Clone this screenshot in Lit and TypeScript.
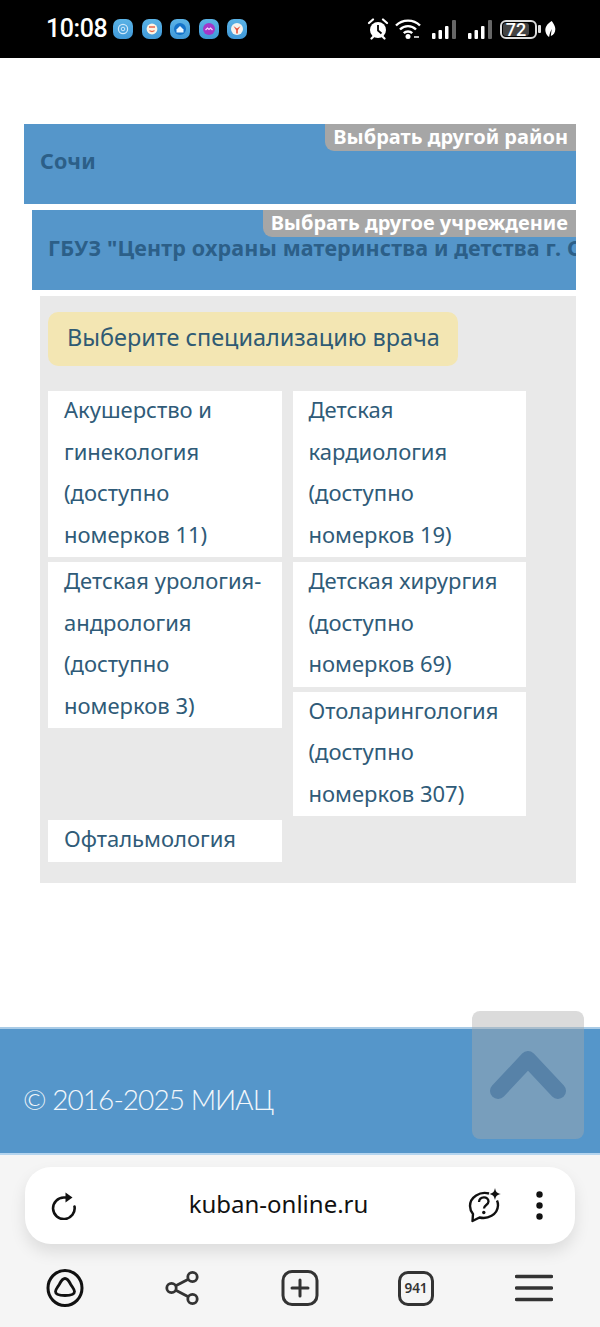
import { LitElement, html, css, svg } from "lit";
import { customElement } from "lit/decorators.js";

const glyphs = [
  svg`<circle cx="10" cy="10" r="4.6" fill="none" stroke="#cfe9fb" stroke-width="1.2"/><circle cx="10" cy="10" r="1.8" fill="none" stroke="#cfe9fb" stroke-width="1"/>`,
  svg`<circle cx="10" cy="10" r="5.4" fill="#fdf3e4"/><path d="M7 8h6M7.500 11.500q2.500 2 5 0" stroke="#e8664a" stroke-width="1.300" fill="none"/>`,
  svg`<circle cx="10" cy="10" r="6" fill="#1573c9"/><path d="M6.500 10.500l3.500-3.500 3.500 3.500v3h-7z" fill="#eaf6ff"/>`,
  svg`<circle cx="10" cy="10" r="6" fill="#a337c9"/><path d="M6.500 11l2-2 1.500 1.500 1.500-1.500 2 2" stroke="#f3d9ff" stroke-width="1.200" fill="none"/>`,
  svg`<circle cx="10" cy="10" r="6" fill="#f6f3ee"/><path d="M6.500 7l3.500 2.500 3.500-2.500-2.700 4.200v3.300h-1.600v-3.300z" fill="#e5503a"/>`,
];

const bars = svg`<g fill="#fff"><rect x="0" y="13" width="3.500" height="6" rx="1"/><rect x="6.500" y="10" width="3.500" height="9" rx="1"/><rect x="13" y="6" width="3.500" height="13" rx="1"/></g><rect x="20" y="0" width="4" height="19" rx="1" fill="#666"/>`;

@customElement("app-root")
export class AppRoot extends LitElement {
  static styles = css`
    :host {
      display: flex;
      flex-direction: column;
      width: 600px;
      height: 1327px;
      overflow: hidden;
      position: relative;
      background: #fff;
      font-family: "Noto Sans", Roboto, sans-serif;
    }
    svg { display: block; flex: none; }
    .status {
      height: 58px;
      flex: none;
      background: #000;
      display: flex;
      align-items: center;
      padding: 0 0 0 46px;
      color: #fff;
    }
    .time {
      font: 500 25px/58px Roboto, sans-serif;
      letter-spacing: -0.4px;
      width: 67px;
    }
    .notes { display: flex; gap: 8.500px; }
    .note {
      width: 20px;
      height: 20px;
      border-radius: 7px;
      background: linear-gradient(#5bb3e6, #3f98d8);
    }
    .sys {
      margin-left: auto;
      margin-right: 44px;
      display: flex;
      align-items: center;
    }
    .wifi { margin-left: 5px; }
    .sig1 { margin-left: 11px; }
    .sig2 { margin-left: 12px; }
    .nub { margin-left: 1px; }
    .leaf { margin-left: 3px; }
    .battery {
      width: 37px;
      height: 19px;
      box-sizing: border-box;
      border: 2px solid #ddd;
      border-radius: 6px;
      padding: 1px;
      margin-left: 8px;
    }
    .battery span {
      display: block;
      width: 26px;
      height: 13px;
      border-radius: 3px;
      background: #444;
      color: #fff;
      font: 500 18px/13px Roboto, sans-serif;
      text-align: center;
    }
    .main { flex: 1; min-height: 0; padding: 66px 24px 0; }
    .bar {
      position: relative;
      height: 80px;
      background: #5596ca;
      overflow: hidden;
      white-space: nowrap;
      margin-bottom: 6px;
      box-sizing: border-box;
      padding: 26px 0 0 16px;
      color: #2c5f88;
      font-size: 21.500px;
      font-weight: 700;
      letter-spacing: 0.15px;
      line-height: 22px;
    }
    .bar.b2 { margin-left: 8px; padding-top: 27px; }
    .tab {
      position: absolute;
      top: 0;
      right: 0;
      height: 27px;
      padding: 0 8px;
      background: #a6a6a6;
      color: #fff;
      border-bottom-left-radius: 9px;
      font-size: 20px;
      font-weight: 700;
      letter-spacing: 0;
      line-height: 25px;
    }
    .panel {
      margin-left: 16px;
      height: 587px;
      box-sizing: border-box;
      background: #e9e9e9;
      padding: 16px 8px;
    }
    .prompt {
      width: 410px;
      height: 54px;
      box-sizing: border-box;
      border-radius: 10px;
      background: #f3e6b3;
      color: #2f5a73;
      padding-left: 19px;
      font-size: 23.450px;
      line-height: 50px;
      margin-bottom: 25px;
    }
    .grid {
      display: grid;
      grid-template-columns: 234px 233.500px;
      column-gap: 10.500px;
      row-gap: 5px;
      align-items: start;
    }
    .stack { display: flex; flex-direction: column; gap: 5px; }
    .tile {
      background: #fff;
      color: #2f5b78;
      padding-left: 16px;
      font-size: 22px;
      line-height: 41.500px;
    }
    .tile span { display: block; transform: translateY(-2px); }
    .tile.last { margin-top: -1px; }
    .footer {
      flex: none;
      height: 128px;
      box-sizing: border-box;
      background: #5596ca;
      border-top: 2px solid #a9cbe6;
      border-bottom: 2px solid #b4d4ee;
      color: #f2f7fb;
      padding-left: 23px;
      letter-spacing: -0.95px;
      font: 300 28px/140px Lato, sans-serif;
    }
    .up {
      position: absolute;
      left: 472px;
      top: 1011px;
      width: 112px;
      height: 128px;
      border-radius: 8px;
      background: rgba(170, 170, 170, 0.42);
      display: flex;
      align-items: center;
      justify-content: center;
    }
    .chrome {
      flex: none;
      height: 172px;
      background: #f5f5f5;
      padding: 12px 25px 0;
      box-sizing: border-box;
    }
    .url {
      height: 77px;
      box-sizing: border-box;
      border-radius: 26px;
      background: #fff;
      box-shadow: 0 8px 16px rgba(0, 0, 0, 0.1);
      display: flex;
      align-items: center;
      padding: 0 32.500px 0 26px;
      color: #111;
    }
    .addr {
      flex: 1;
      text-align: center;
      font: 400 24px/30px "Noto Sans", sans-serif;
      padding: 0 0 3px 11px;
    }
    .ask { margin-left: -2px; }
    .dots { margin-left: 32.500px; }
    .nav {
      display: grid;
      grid-template-columns: repeat(5, 117px);
      justify-items: center;
      align-items: center;
      margin: 24px -18px 0;
    }
    .alice { margin-right: 2px; }
    .share { margin-right: 2px; }
    .count {
      width: 36px;
      height: 35px;
      box-sizing: border-box;
      border: 3px solid #333;
      border-radius: 10px;
      color: #333;
      font: 600 13.500px/29px "Noto Sans", sans-serif;
      text-align: center;
      margin-right: 1px;
    }
  `;

  render() {
    return html`
      <div class="status">
        <div class="time">10:08</div>
        <div class="notes">
          ${glyphs.map(
            (g) => html`<div class="note"><svg width="20" height="20" viewBox="0 0 20 20">${g}</svg></div>`
          )}
        </div>
        <div class="sys">
          <svg width="24" height="22" viewBox="0 0 24 22">
            <circle cx="12" cy="12" r="8" fill="#fff"/>
            <path d="M12 7v5.500l3.500 3" stroke="#000" stroke-width="1.800" fill="none"/>
            <path d="M3 5l4-3.500M21 5l-4-3.500M5.500 20.500l2-2M18.500 20.500l-2-2" stroke="#fff" stroke-width="2.200" stroke-linecap="round"/>
          </svg>
          <svg class="wifi" width="26" height="20" viewBox="0 0 26 20">
            <path d="M1 6.500C7.500 0 18.500 0 25 6.500M5 10.500c4.500-4.500 11.500-4.500 16 0M8.800 14.200c2.300-2.300 6.100-2.300 8.400 0" stroke="#fff" stroke-width="2.400" fill="none"/>
            <circle cx="13" cy="17.500" r="2.500" fill="#fff"/>
            <path d="M19 18h5" stroke="#bbb" stroke-width="2"/>
          </svg>
          <svg class="sig1" width="24" height="19" viewBox="0 0 24 19">${bars}</svg>
          <svg class="sig2" width="24" height="19" viewBox="0 0 24 19">${bars}</svg>
          <div class="battery"><span>72</span></div>
          <svg class="nub" width="3" height="8" viewBox="0 0 3 8"><rect width="3" height="8" rx="1" fill="#ddd"/></svg>
          <svg class="leaf" width="12" height="16" viewBox="0 0 12 18">
            <path d="M8 0C3 3 0 7 1 12c.5 3 2.500 5 4 6 .5-4 2-7 3-9-.5 3-1 6-1 8 3-1 5-4 5-8 0-3-2-6-4-9z" fill="#fff"/>
          </svg>
        </div>
      </div>

      <div class="main">
        <div class="bar">Сочи<div class="tab">Выбрать другой район</div></div>
        <div class="bar b2">
          ГБУЗ "Центр охраны материнства и детства г. Сочи"
          <div class="tab">Выбрать другое учреждение</div>
        </div>
        <div class="panel">
          <div class="prompt">Выберите специализацию врача</div>
          <div class="grid">
            <div class="tile"><span>Акушерство и<br />гинекология<br />(доступно<br />номерков 11)</span></div>
            <div class="tile"><span>Детская<br />кардиология<br />(доступно<br />номерков 19)</span></div>
            <div class="tile"><span>Детская урология-<br />андрология<br />(доступно<br />номерков 3)</span></div>
            <div class="stack">
              <div class="tile"><span>Детская хирургия<br />(доступно<br />номерков 69)</span></div>
              <div class="tile"><span>Отоларингология<br />(доступно<br />номерков 307)</span></div>
            </div>
            <div class="tile last"><span>Офтальмология</span></div>
          </div>
        </div>
      </div>

      <div class="footer">© 2016-2025 МИАЦ</div>
      <div class="up">
        <svg width="76" height="50" viewBox="0 0 76 50">
          <path d="M8 41L38 9l30 32" stroke="#5782a8" stroke-width="16" stroke-linecap="round" stroke-linejoin="round" fill="none"/>
        </svg>
      </div>

      <div class="chrome">
        <div class="url">
          <svg width="26" height="28" viewBox="0 0 26 28">
            <path d="M23.500 14.500A10.800 10.800 0 1 1 13 5.500h3" stroke="#111" stroke-width="2.600" fill="none" stroke-linecap="round"/>
            <path d="M14.500 0.500l7 5-7 5z" fill="#111"/>
          </svg>
          <div class="addr">kuban-online.ru</div>
          <svg class="ask" width="36" height="36" viewBox="0 0 36 36">
            <path d="M22 5.500C13 3 3 9 3 18c0 3 1 5.500 3 8l-.5 7 7-3.500c8 2 18-2.500 18.500-12 .1-2-.3-3.500-1-5" stroke="#111" stroke-width="2.400" fill="none" stroke-linejoin="round"/>
            <path d="M12 14c.5-6 9.500-6 9.500-.5 0 3.500-4.500 3.500-4.500 7" stroke="#111" stroke-width="2.300" fill="none"/>
            <circle cx="16.800" cy="24.500" r="1.700" fill="#111"/>
            <path d="M28 0c.8 4 2 5.200 6 6-4 .8-5.200 2-6 6-.8-4-2-5.200-6-6 4-.8 5.200-2 6-6z" fill="#111"/>
          </svg>
          <svg class="dots" width="7" height="29" viewBox="0 0 7 29">
            <circle cx="3.500" cy="3.500" r="3.200" fill="#111"/><circle cx="3.500" cy="14.500" r="3.200" fill="#111"/><circle cx="3.500" cy="25.500" r="3.200" fill="#111"/>
          </svg>
        </div>
        <div class="nav">
          <svg class="alice" width="40" height="40" viewBox="0 0 40 40">
            <ellipse cx="20" cy="20" rx="17" ry="17.500" stroke="#111" stroke-width="3" fill="none"/>
            <path d="M20 10.500c2.500 0 4 2.500 5.500 5.500 1.500 2.800 4 5.500 4 7.500 0 3-4.500 4-9.500 4s-9.500-1-9.500-4c0-2 2.500-4.700 4-7.500 1.500-3 3-5.500 5.500-5.500z" stroke="#111" stroke-width="2.800" fill="none"/>
          </svg>
          <svg class="share" width="38" height="40" viewBox="0 0 38 40">
            <circle cx="29.500" cy="9" r="4.700" stroke="#333" stroke-width="2.800" fill="none"/>
            <circle cx="8.500" cy="20" r="4.700" stroke="#333" stroke-width="2.800" fill="none"/>
            <circle cx="29.500" cy="31" r="4.700" stroke="#333" stroke-width="2.800" fill="none"/>
            <path d="M12.800 17.800l12.500-6.600M12.800 22.200l12.500 6.600" stroke="#333" stroke-width="2.800"/>
          </svg>
          <svg width="38" height="36" viewBox="0 0 38 36">
            <rect x="2" y="1.500" width="34" height="33" rx="9" stroke="#333" stroke-width="3" fill="none"/>
            <path d="M19 10v16M11 18h16" stroke="#333" stroke-width="3" stroke-linecap="round"/>
          </svg>
          <div class="count">941</div>
          <svg width="38" height="28" viewBox="0 0 38 28">
            <path d="M1.500 2.500h35M1.500 14h35M1.500 25.500h35" stroke="#333" stroke-width="3.400" stroke-linecap="round"/>
          </svg>
        </div>
      </div>
    `;
  }
}
